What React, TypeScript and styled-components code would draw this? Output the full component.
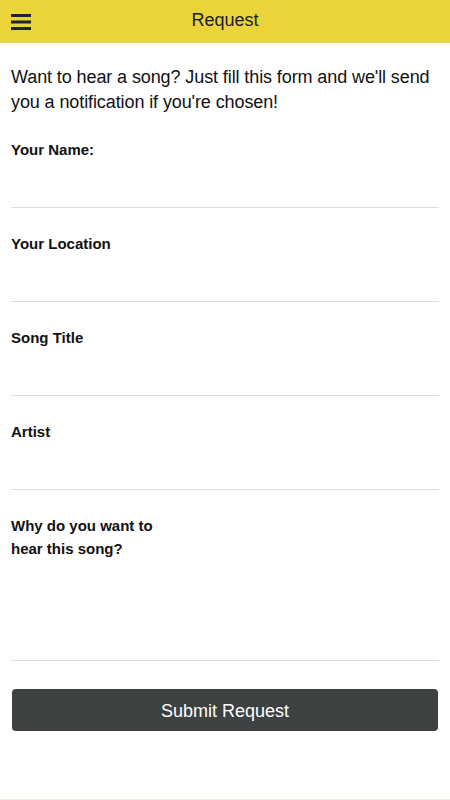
import React from "react";
import styled, { createGlobalStyle } from "styled-components";

const Global = createGlobalStyle`
  html, body { margin: 0; padding: 0; background: #fff; }
  body { font-family: "Liberation Sans", Arial, Helvetica, sans-serif; color: #111; }
  * { box-sizing: border-box; }
`;

const Page = styled.div`
  width: 450px;
  height: 800px;
  display: flex;
  flex-direction: column;
  background: #fff;
  border-bottom: 1px solid #f5efc8;
`;

const Header = styled.header`
  height: 43px;
  background: #ebd43a;
  display: grid;
  grid-template-columns: 43px 1fr 43px;
  align-items: center;
  border-bottom: 1px solid #e6d35a;
`;

const MenuButton = styled.button`
  border: none;
  background: none;
  padding: 0 0 0 11px;
  height: 43px;
  display: flex;
  align-items: center;
  cursor: pointer;
`;

const Title = styled.h1`
  margin: 0;
  text-align: center;
  font-size: 18px;
  font-weight: normal;
  color: #1a1c2a;
  padding-bottom: 2px;
`;

const Content = styled.main`
  flex: 1;
  padding: 21px 11px 0 11px;
  display: flex;
  flex-direction: column;
`;

const Intro = styled.p`
  margin: 0;
  font-size: 18px;
  line-height: 25px;
  color: #111;
  letter-spacing: -0.1px;
  padding-top: 1px;
  height: 50px;
`;

const Field = styled.label`
  display: flex;
  flex-direction: column;
  padding-top: 24px;
  border-bottom: 1px solid #dddddd;
`;

const LabelText = styled.span<{ $narrow?: boolean }>`
  font-size: 15px;
  font-weight: bold;
  line-height: 23px;
  color: #111;
  max-width: ${(p) => (p.$narrow ? "160px" : "none")};
`;

const Input = styled.input`
  height: 46px;
  border: none;
  outline: none;
  background: transparent;
  font: inherit;
  padding: 0;
`;

const TextArea = styled.textarea`
  height: 100px;
  border: none;
  outline: none;
  background: transparent;
  font: inherit;
  resize: none;
  padding: 0;
  display: block;
`;

const Submit = styled.button`
  margin: 28px 1px 0 1px;
  height: 42px;
  padding: 3px 0 0 0;
  border: none;
  border-radius: 4px;
  background: #3d4142;
  color: #fff;
  font-family: "Liberation Sans", Arial, sans-serif;
  font-size: 18px;
  cursor: pointer;
`;

const Hamburger = () => (
  <svg width="21" height="18" viewBox="0 0 21 18">
    <rect x="0" y="1" width="20" height="3" fill="#1d2436" />
    <rect x="0" y="7.5" width="20" height="3" fill="#1d2436" />
    <rect x="0" y="14" width="20" height="3" fill="#1d2436" />
  </svg>
);

export default function App() {
  return (
    <>
      <Global />
      <Page>
        <Header>
          <MenuButton aria-label="Menu">
            <Hamburger />
          </MenuButton>
          <Title>Request</Title>
          <span />
        </Header>
        <Content>
          <Intro>
            Want to hear a song? Just fill this form and we'll send you a notification if you're chosen!
          </Intro>
          <Field>
            <LabelText>Your Name:</LabelText>
            <Input />
          </Field>
          <Field>
            <LabelText>Your Location</LabelText>
            <Input />
          </Field>
          <Field>
            <LabelText>Song Title</LabelText>
            <Input />
          </Field>
          <Field>
            <LabelText>Artist</LabelText>
            <Input />
          </Field>
          <Field>
            <LabelText $narrow>Why do you want to hear this song?</LabelText>
            <TextArea />
          </Field>
          <Submit>Submit Request</Submit>
        </Content>
      </Page>
    </>
  );
}
